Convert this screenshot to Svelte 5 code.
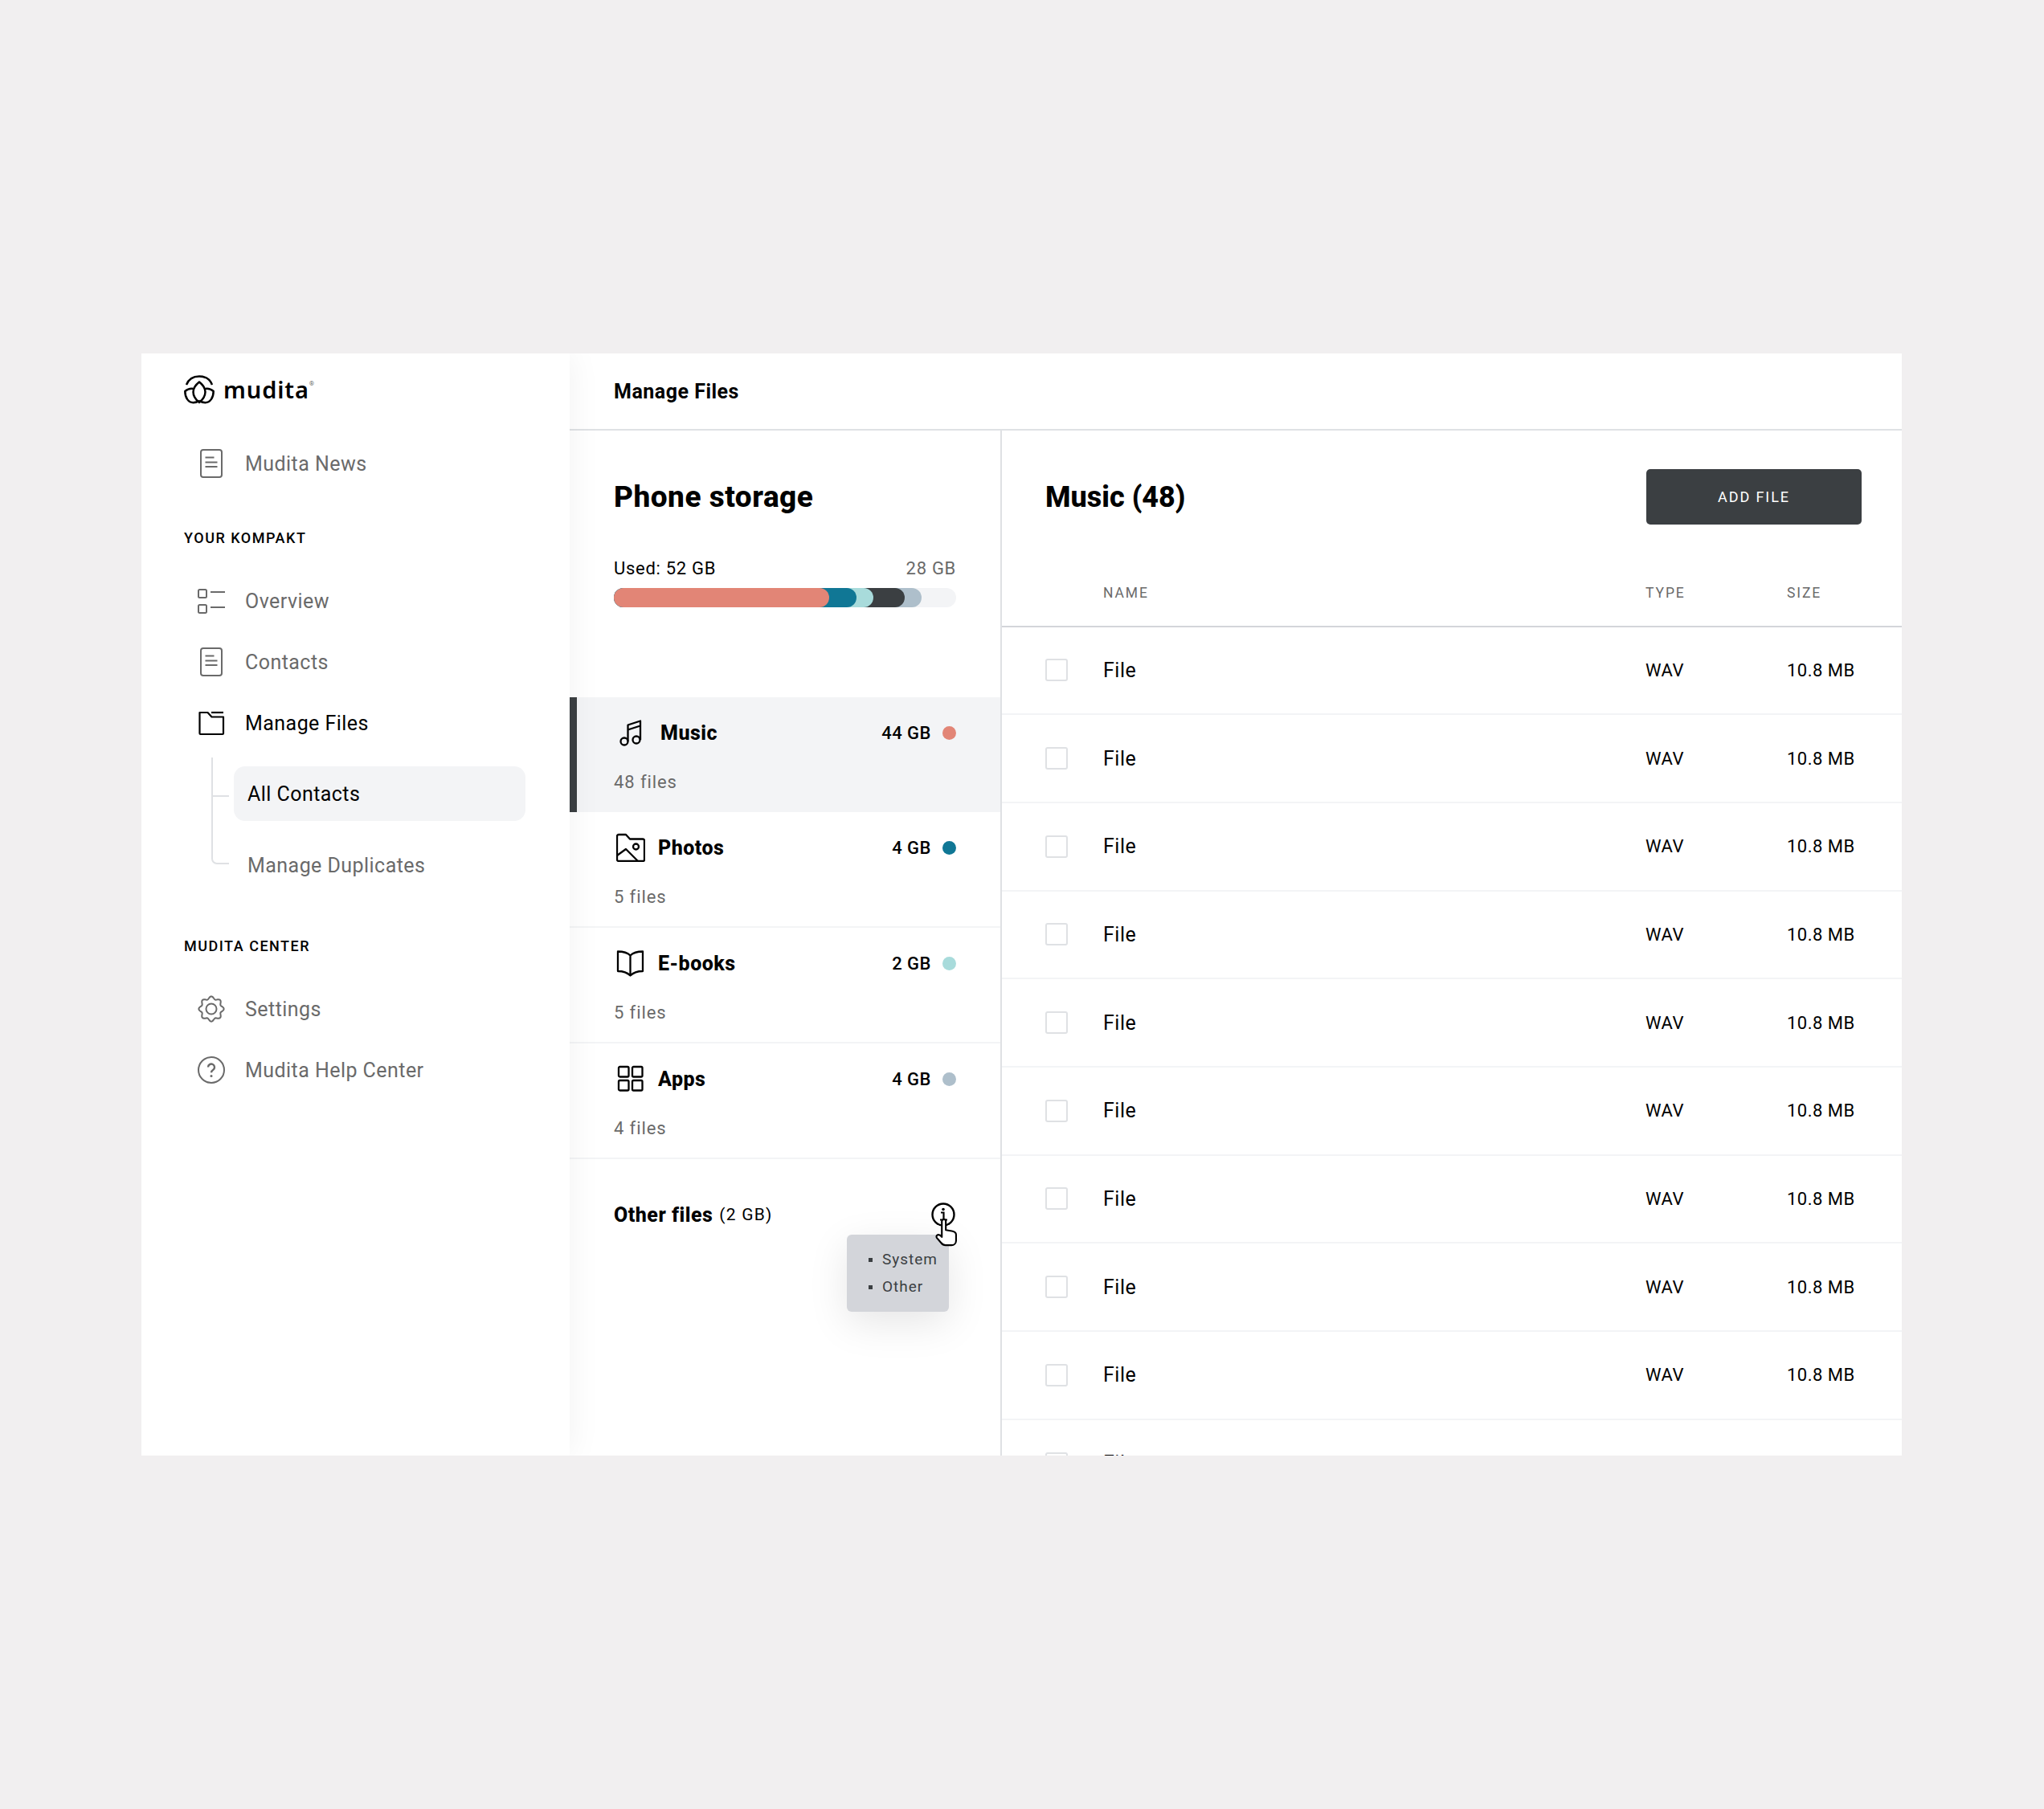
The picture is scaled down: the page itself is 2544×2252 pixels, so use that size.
<script>
  const storage = [
    { name: 'Music', size: '44 GB', files: '48 files', color: '#e28576', icon: 'music', active: true },
    { name: 'Photos', size: '4 GB', files: '5 files', color: '#107795', icon: 'photos' },
    { name: 'E-books', size: '2 GB', files: '5 files', color: '#a8dbdb', icon: 'book' },
    { name: 'Apps', size: '4 GB', files: '4 files', color: '#aebfcb', icon: 'apps' }
  ];

  // bar segments, widths in px, drawn back to front
  const segments = [
    { color: '#aebfcb', width: 383 },
    { color: '#3b3f42', width: 362 },
    { color: '#a8dbdb', width: 323 },
    { color: '#107795', width: 302 },
    { color: '#e28576', width: 268 }
  ];

  const rows = Array.from({ length: 10 }, () => ({ name: 'File', type: 'WAV', size: '10.8 MB' }));

  // scalloped gear outline
  const gear = Array.from({ length: 96 }, (_, i) => {
    const a = (i / 96) * Math.PI * 2;
    const r = 14 + 1.6 * Math.cos(a * 8);
    return `${(18 + r * Math.sin(a)).toFixed(2)} ${(18 - r * Math.cos(a)).toFixed(2)}`;
  }).join(' L');
</script>

{#snippet doc()}
  <svg class="icon" width="36" height="36" viewBox="0 0 36 36" fill="none" stroke="currentColor" stroke-width="2">
    <rect x="5" y="1" width="26" height="34" rx="3" />
    <path d="M10.500 10.500h11M10.500 16.500h15M10.500 22h15" />
  </svg>
{/snippet}

{#snippet storageIcon(kind)}
  <svg class="icon" width="36" height="36" viewBox="0 0 36 36" fill="none" stroke="currentColor" stroke-width="2.300" stroke-linejoin="round">
    {#if kind === 'music'}
      <circle cx="10" cy="29" r="4.500" />
      <circle cx="25" cy="27" r="4.500" />
      <path d="M14.500 29V8.500L30 3.500V27M14.500 14.500L30 9.500" />
    {:else if kind === 'photos'}
      <path d="M1 4a2 2 0 0 1 2-2h9l5 5.500h16a2 2 0 0 1 2 2V33a2 2 0 0 1-2 2H3a2 2 0 0 1-2-2z" />
      <circle cx="24.500" cy="17" r="3.500" />
      <path d="M1 28l11-8 15 15" />
    {:else if kind === 'book'}
      <path d="M17.500 8.500C14 5 8 3.500 2 3.500V28c6 0 11.500 1.500 15.500 5.500C21.500 29.500 27 28 33 28V3.500C27 3.500 21 5 17.500 8.500zM17.500 8.500V33.500" />
    {:else}
      <rect x="3" y="3" width="12.500" height="12.500" rx="1.500" />
      <rect x="20" y="3" width="12.500" height="12.500" rx="1.500" />
      <rect x="3" y="20" width="12.500" height="12.500" rx="1.500" />
      <rect x="20" y="20" width="12.500" height="12.500" rx="1.500" />
    {/if}
  </svg>
{/snippet}

<div class="page">
  <div class="shell">
    <aside class="sidebar">
      <div class="logo">
        <svg width="38" height="36" viewBox="0 0 38 36" fill="none" stroke="#000" stroke-width="2.500" stroke-linejoin="round">
          <path d="M3 12C5.500 5.500 11.500 1.500 19 1.500S32.500 5.500 35 12" />
          <path d="M19 8.500c4.800 3.800 7.500 8 7.500 12.500S24 30 19 34c-5-4-7.500-8.500-7.500-13S14.200 12.300 19 8.500z" />
          <path d="M11.700 17C8 16.300 4.500 17.300 1.300 20c0 8 4.200 14.200 10.200 14.200 3 0 5.500-.8 7.500-2.400" />
          <path d="M26.300 17c3.700-.7 7.200.3 10.400 3 0 8-4.200 14.200-10.200 14.200-3 0-5.500-.8-7.500-2.400" />
        </svg>
        <span class="wordmark">mudita</span>
        <span class="reg">®</span>
      </div>

      <a class="nav">{@render doc()}Mudita News</a>

      <div class="label">YOUR KOMPAKT</div>
      <a class="nav">
        <svg class="icon" width="36" height="36" viewBox="0 0 36 36" fill="none" stroke="currentColor" stroke-width="2">
          <rect x="2" y="4" width="10" height="10" rx="1.500" />
          <rect x="2" y="23" width="10" height="10" rx="1.500" />
          <path d="M17 7h18M17 26h18" />
        </svg>
        Overview
      </a>
      <a class="nav">{@render doc()}Contacts</a>
      <a class="nav current">
        <svg class="icon" width="36" height="36" viewBox="0 0 36 36" fill="none" stroke="currentColor" stroke-width="2.200" stroke-linejoin="round">
          <path d="M3.500 5h10l5 5.500h14.500V31a1 1 0 0 1-1 1H4.500a1 1 0 0 1-1-1z" />
          <path d="M18 5h15" />
        </svg>
        Manage Files
      </a>

      <div class="sub">
        <svg class="tree" width="24" height="136" viewBox="0 0 24 136" fill="none" stroke="#dfe1e4" stroke-width="2">
          <path d="M1 0V126a6 6 0 0 0 6 6H22M1 48H22" />
        </svg>
        <a class="sub-item selected">All Contacts</a>
        <a class="sub-item">Manage Duplicates</a>
      </div>

      <div class="label second">MUDITA CENTER</div>
      <a class="nav">
        <svg class="icon" width="36" height="36" viewBox="0 0 36 36" fill="none" stroke="currentColor" stroke-width="2">
          <circle cx="18" cy="18" r="6.500" />
          <path d="M{gear}z" />
        </svg>
        Settings
      </a>
      <a class="nav">
        <svg class="icon" width="36" height="36" viewBox="0 0 36 36" fill="none" stroke="currentColor" stroke-width="2">
          <circle cx="18" cy="18" r="16" />
          <path d="M14 14.500a4 4 0 1 1 6.300 3.300c-1.500 1-2.300 1.700-2.300 3.500" stroke-width="2.400" />
          <circle cx="18" cy="25.500" r="1.500" fill="currentColor" stroke="none" />
        </svg>
        Mudita Help Center
      </a>
    </aside>

    <main class="main">
      <header class="topbar">Manage Files</header>
      <div class="content">
        <section class="storage">
          <div class="storage-head">
            <h1>Phone storage</h1>
            <div class="usage">
              <span>Used: 52 GB</span>
              <span class="free">28 GB</span>
            </div>
            <div class="bar">
              {#each segments as seg}
                <div class="seg" style="width: {seg.width}px; background: {seg.color}"></div>
              {/each}
            </div>
          </div>

          {#each storage as item}
            <div class="category" class:active={item.active}>
              <div class="cat-top">
                {@render storageIcon(item.icon)}
                <span class="cat-name">{item.name}</span>
                <span class="cat-size">{item.size}</span>
                <span class="dot" style="background: {item.color}"></span>
              </div>
              <div class="cat-files">{item.files}</div>
            </div>
          {/each}

          <div class="other">
            <span class="other-name">Other files</span>
            <span class="other-size">(2 GB)</span>
            <span class="info">
              <svg width="32" height="32" viewBox="0 0 32 32" fill="none" stroke="#000" stroke-width="2.400">
                <circle cx="16" cy="16" r="13.500" />
                <circle cx="16" cy="9.500" r="1.800" fill="#000" stroke="none" />
                <path d="M13 13.500h3.500v9M12 22.500h9" stroke-width="2.200" />
              </svg>
              <svg class="hand" width="28" height="35" viewBox="0 0 34 42" fill="#fff" stroke="#000" stroke-width="2.600" stroke-linejoin="round">
                <path d="M10 4a3 3 0 0 1 6 0v13l9 1.500c4 .7 6.500 2 6.500 5.500v9c0 4-3 7-7 7h-9c-3 0-5-1.500-6.500-3.500L2.500 29c-1.300-2-.5-3.800 1-4.500 2-.7 4 0 6.500 3z" />
              </svg>
            </span>
            <div class="tooltip">
              <ul>
                <li>System</li>
                <li>Other</li>
              </ul>
            </div>
          </div>
        </section>

        <section class="files">
          <div class="files-head">
            <h2>Music (48)</h2>
            <button class="add">ADD FILE</button>
          </div>
          <div class="row thead">
            <span></span>
            <span>NAME</span>
            <span>TYPE</span>
            <span>SIZE</span>
          </div>
          {#each rows as row}
            <div class="row">
              <span class="check"></span>
              <span class="file-name">{row.name}</span>
              <span>{row.type}</span>
              <span>{row.size}</span>
            </div>
          {/each}
        </section>
      </div>
    </main>
  </div>
</div>

<style>
  :global(body) {
    background: #f1eff0;
  }

  .page {
    height: 2252px;
    padding: 440px 177px 0 176px;
    box-sizing: border-box;
    font-family: Roboto, "Liberation Sans", sans-serif;
    color: #000;
  }

  .shell {
    display: flex;
    height: 1372px;
    background: #fff;
    overflow: hidden;
  }

  /* sidebar */
  .sidebar {
    position: relative;
    z-index: 1;
    width: 533px;
    flex: none;
    padding: 27px 0 0 53px;
    box-sizing: border-box;
    background: #fff;
    box-shadow: 0 0 40px rgba(0, 0, 0, 0.06);
  }

  .logo {
    display: flex;
    align-items: center;
    height: 36px;
    margin-bottom: 36px;
  }

  .wordmark {
    margin-left: 11px;
    font-family: "Noto Sans", sans-serif;
    font-size: 29px;
    font-weight: 600;
    line-height: 36px;
    letter-spacing: 0.9px;
  }

  .reg {
    align-self: flex-start;
    margin: 6px 0 0 0;
    font-size: 8px;
    line-height: 10px;
    color: #6a6a6a;
  }

  .nav {
    display: flex;
    align-items: center;
    gap: 24px;
    height: 76px;
    padding-left: 16px;
    font-size: 25px;
    letter-spacing: 0.45px;
    color: #6a6a6a;
  }

  .nav.current {
    color: #000;
  }

  .icon {
    flex: none;
  }

  .label {
    height: 40px;
    margin: 35px 0 20px;
    font-size: 18px;
    font-weight: 500;
    line-height: 40px;
    letter-spacing: 1.5px;
  }

  .label.second {
    margin-top: 47px;
  }

  .sub {
    position: relative;
    width: 363px;
    margin: 16px 0 0 62px;
  }

  .tree {
    position: absolute;
    left: -28px;
    top: -11px;
  }

  .sub-item {
    display: flex;
    align-items: center;
    height: 68px;
    padding-left: 17px;
    border-radius: 14px;
    font-size: 25px;
    letter-spacing: 0.45px;
    color: #6a6a6a;
  }

  .sub-item + .sub-item {
    margin-top: 21px;
  }

  .sub-item.selected {
    background: #f3f4f6;
    color: #000;
  }

  /* main */
  .main {
    flex: 1;
    display: flex;
    flex-direction: column;
    min-width: 0;
  }

  .topbar {
    height: 94px;
    padding-left: 55px;
    border-bottom: 2px solid #dfe1e4;
    font-size: 25px;
    font-weight: 700;
    line-height: 95px;
    letter-spacing: 0.5px;
  }

  .content {
    flex: 1;
    display: flex;
    min-height: 0;
  }

  .storage {
    position: relative;
    width: 538px;
    flex: none;
    border-right: 2px solid #dfe1e4;
    box-sizing: border-box;
  }

  .storage-head {
    height: 332px;
    padding: 0 55px;
    box-sizing: border-box;
  }

  h1 {
    margin: 0;
    padding-top: 55px;
    font-size: 37px;
    font-weight: 800;
    line-height: 56px;
    letter-spacing: 0.5px;
  }

  .usage {
    display: flex;
    justify-content: space-between;
    margin-top: 46px;
    font-size: 22px;
    line-height: 30px;
    letter-spacing: 0.7px;
  }

  .free {
    color: #6a6a6a;
  }

  .bar {
    position: relative;
    height: 24px;
    margin-top: 9px;
    border-radius: 12px;
    background: #f3f4f6;
  }

  .seg {
    position: absolute;
    left: 0;
    top: 0;
    height: 24px;
    border-radius: 12px;
  }

  .category {
    position: relative;
    height: 144px;
    padding: 26px 55px 0;
    box-sizing: border-box;
    border-bottom: 2px solid #f3f4f6;
  }

  .category.active {
    height: 143px;
    background: #f3f4f6;
    border-bottom: none;
  }

  .category.active::before {
    content: "";
    position: absolute;
    left: 0;
    top: 0;
    bottom: 0;
    width: 9px;
    background: #3b3f42;
  }

  .cat-top {
    display: flex;
    align-items: center;
    height: 36px;
  }

  .cat-top .icon {
    margin-left: 3px;
  }

  .cat-name {
    margin-left: 16px;
    font-size: 25px;
    font-weight: 800;
    letter-spacing: 0.5px;
  }

  .active .cat-name {
    margin-left: 19px;
  }

  .cat-size {
    margin-left: auto;
    font-size: 22px;
    font-weight: 500;
    letter-spacing: 0.5px;
  }

  .dot {
    width: 17px;
    height: 17px;
    margin-left: 14px;
    border-radius: 50%;
  }

  .cat-files {
    margin-top: 29px;
    font-size: 22px;
    line-height: 30px;
    letter-spacing: 0.9px;
    color: #6a6a6a;
  }

  .other {
    position: relative;
    display: flex;
    align-items: center;
    gap: 8px;
    height: 40px;
    margin-top: 49px;
    padding: 0 55px;
  }

  .other-name {
    font-size: 25px;
    font-weight: 800;
    letter-spacing: 0.5px;
  }

  .other-size {
    font-size: 21px;
    font-weight: 400;
    letter-spacing: 1.2px;
  }

  .info {
    position: absolute;
    right: 55px;
    top: 4px;
    width: 32px;
    height: 32px;
    z-index: 2;
  }

  .hand {
    position: absolute;
    left: 6px;
    top: 21px;
  }

  .tooltip {
    position: absolute;
    left: 345px;
    top: 45px;
    width: 127px;
    height: 96px;
    border-radius: 6px;
    background: #d3d5da;
    box-shadow: 0 14px 50px rgba(0, 0, 0, 0.1);
  }

  .tooltip ul {
    margin: 0;
    padding: 14px 0 0 44px;
    font-size: 19px;
    line-height: 34px;
    letter-spacing: 1px;
    color: #3b3f42;
  }

  .tooltip li {
    position: relative;
    list-style: none;
  }

  .tooltip li::before {
    content: "";
    position: absolute;
    left: -17px;
    top: 15px;
    width: 5px;
    height: 5px;
    background: #3b3f42;
  }

  .files {
    flex: 1;
    min-width: 0;
  }

  .files-head {
    display: flex;
    align-items: center;
    justify-content: space-between;
    padding: 48px 50px 0 54px;
  }

  h2 {
    margin: 0;
    font-size: 36px;
    font-weight: 800;
  }

  .add {
    width: 268px;
    height: 69px;
    border: none;
    border-radius: 5px;
    background: #3b3f42;
    color: #fff;
    font-family: inherit;
    font-size: 18px;
    font-weight: 400;
    letter-spacing: 1.9px;
  }

  .row {
    display: grid;
    grid-template-columns: 72px 675px 176px 1fr;
    align-items: center;
    height: 109.7px;
    padding-left: 54px;
    box-sizing: border-box;
    border-bottom: 2px solid #f3f4f6;
    font-size: 22px;
    font-weight: 400;
    letter-spacing: 0.5px;
  }

  .row.thead {
    height: 127.5px;
    padding-top: 45px;
    border-bottom-color: #d3d5da;
    font-size: 17.5px;
    letter-spacing: 1.9px;
    color: #6a6a6a;
  }

  .check {
    width: 28px;
    height: 28px;
    border: 2px solid #dfe1e4;
    border-radius: 3px;
    box-sizing: border-box;
  }

  .file-name {
    font-size: 25px;
  }
</style>
